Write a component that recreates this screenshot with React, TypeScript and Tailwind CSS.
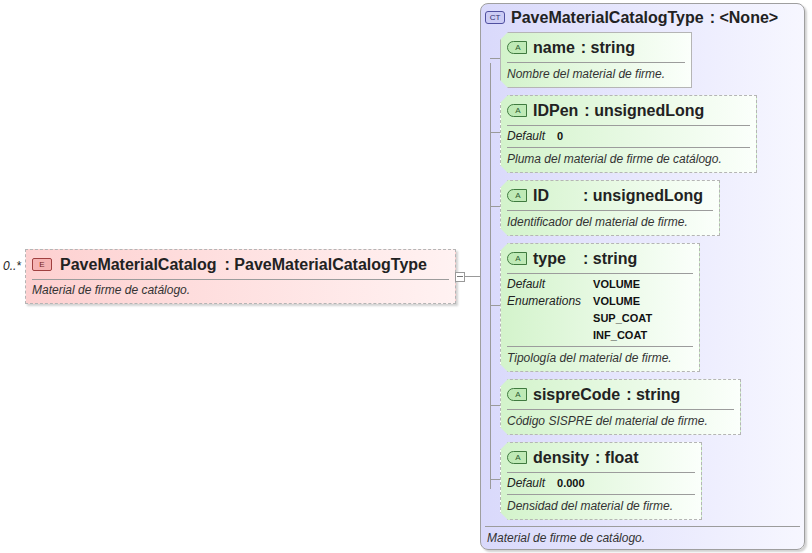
import React from "react";

// ── Attribute nodes of the complex type ─────────────────────────────────────

interface Attr {
  name: string;
  type: string;
  nameW?: string;
  w: string;
  required?: boolean;
  rows?: [string, string[]][];
  doc: string;
}

const attrs: Attr[] = [
  { name: "name", type: "string", w: "w-[192px]", required: true, doc: "Nombre del material de firme." },
  { name: "IDPen", type: "unsignedLong", w: "w-[257px]", rows: [["Default", ["0"]]], doc: "Pluma del material de firme de catálogo." },
  { name: "ID", type: "unsignedLong", nameW: "w-[44px]", w: "w-[220px]", doc: "Identificador del material de firme." },
  {
    name: "type",
    type: "string",
    nameW: "w-[44px]",
    w: "w-[200px]",
    rows: [
      ["Default", ["VOLUME"]],
      ["Enumerations", ["VOLUME", "SUP_COAT", "INF_COAT"]],
    ],
    doc: "Tipología del material de firme.",
  },
  { name: "sispreCode", type: "string", w: "w-[241px]", doc: "Código SISPRE del material de firme." },
  { name: "density", type: "float", w: "w-[202px]", rows: [["Default", ["0.000"]]], doc: "Densidad del material de firme." },
];

function Badge({ label, cls }: { label: string; cls: string }) {
  return (
    <span className={`inline-flex h-[13px] items-center justify-center border text-[8px] leading-none ${cls}`}>
      {label}
    </span>
  );
}

function AttrBox({ a }: { a: Attr }) {
  return (
    <div className="flex items-stretch">
      {/* tick from tree line */}
      <div className="w-[10px] shrink-0 flex items-center">
        <div className="h-px w-full bg-[#9a9a9a] -mt-[4px]" />
      </div>
      <div
        className={`${a.w} ${a.required ? "border-solid" : "border-dashed"} border border-[#b5b5b5] bg-gradient-to-r from-[#d3f3cb] to-[#fbfffb] px-[6px] pb-[3px] shadow-[2px_2px_2px_rgba(0,0,0,0.18)] [clip-path:polygon(8px_0,100%_0,100%_100%,8px_100%,0_calc(100%-8px),0_8px)]`}
      >
        <div className="flex items-center gap-[6px] h-[30px] border-b border-[#9c9c9c]">
          <Badge label="A" cls="w-[20px] rounded-l-full rounded-r-[2px] border-[#3f7a3f] bg-[#bfeab6] text-[#2d5a2d] pl-[2px]" />
          <span className={`${a.nameW ?? ""} text-[16px] font-bold text-[#222]`}>{a.name}</span>
          <span className="text-[16px] font-bold text-[#222]">: {a.type}</span>
        </div>
        {a.rows && (
          <div className="grid grid-cols-[auto_1fr] gap-x-[12px] border-b border-[#9c9c9c] py-[2px]">
            {a.rows.map(([k, vals]) => (
              <React.Fragment key={k}>
                <span className="text-[12px] italic text-[#222] leading-[17px]">{k}</span>
                <div className="flex flex-col">
                  {vals.map((v) => (
                    <span key={v} className="text-[11px] font-bold text-[#111] leading-[17px]">{v}</span>
                  ))}
                </div>
              </React.Fragment>
            ))}
          </div>
        )}
        <div className="text-[12px] italic text-[#333] leading-[20px] pt-[1px]">{a.doc}</div>
      </div>
    </div>
  );
}

// ── Component ─────────────────────────────────────────────────────────────────

export default function App() {
  return (
    <div className="w-[812px] h-[553px] bg-white flex items-center font-[Liberation_Sans,Arial,sans-serif]">
      {/* Element */}
      <div className="flex items-center pl-[3px]">
        <span className="text-[12px] italic text-[#222] mr-[4px] -mt-[22px]">0..*</span>
        <div className="w-[431px] border border-dashed border-[#b5b5b5] bg-gradient-to-r from-[#fdd0d0] to-[#fff2f2] px-[6px] pb-[3px] shadow-[2px_2px_2px_rgba(0,0,0,0.18)]">
          <div className="flex items-center gap-[8px] h-[30px] border-b border-[#9c9c9c]">
            <Badge label="E" cls="w-[20px] rounded-[2px] border-[#a04040] bg-[#f6b3b3] text-[#702020]" />
            <span className="text-[16px] font-bold text-[#222]">PaveMaterialCatalog</span>
            <span className="text-[16px] font-bold text-[#222]">: PaveMaterialCatalogType</span>
          </div>
          <div className="text-[12px] italic text-[#333] leading-[20px]">Material de firme de catálogo.</div>
        </div>
        {/* collapse toggle + connector */}
        <div className="flex items-center -ml-[1px]">
          <div className="w-[10px] h-[10px] border border-[#999] bg-white flex items-center justify-center">
            <div className="w-[6px] h-px bg-[#777]" />
          </div>
          <div className="w-[15px] h-px bg-[#999]" />
        </div>
      </div>

      {/* Complex type */}
      <div className="w-[325px] h-[547px] flex flex-col rounded-[8px] border border-[#9f9f9f] bg-gradient-to-r from-[#d9d9fb] to-[#f7f7ff] shadow-[2px_2px_2px_rgba(0,0,0,0.18)]">
        <div className="flex items-center gap-[6px] h-[27px] px-[4px]">
          <Badge label="CT" cls="w-[20px] rounded-[3px] border-[#5050a0] bg-[#ccccf5] text-[#303070]" />
          <span className="text-[16px] font-bold text-[#222]">PaveMaterialCatalogType</span>
          <span className="text-[16px] font-bold text-[#222]">: &lt;None&gt;</span>
        </div>
        <div className="flex-1 flex pl-[9px]">
          <div className="relative flex flex-col gap-[7px] pt-[1px]">
            <div className="absolute left-0 top-[32px] bottom-[37px] w-px bg-[#9a9a9a]" />
            {attrs.map((a) => (
              <AttrBox key={a.name} a={a} />
            ))}
          </div>
        </div>
        <div className="mx-[4px] border-t border-[#9c9c9c] text-[12px] italic text-[#333] leading-[22px] px-[2px]">
          Material de firme de catálogo.
        </div>
      </div>
    </div>
  );
}
